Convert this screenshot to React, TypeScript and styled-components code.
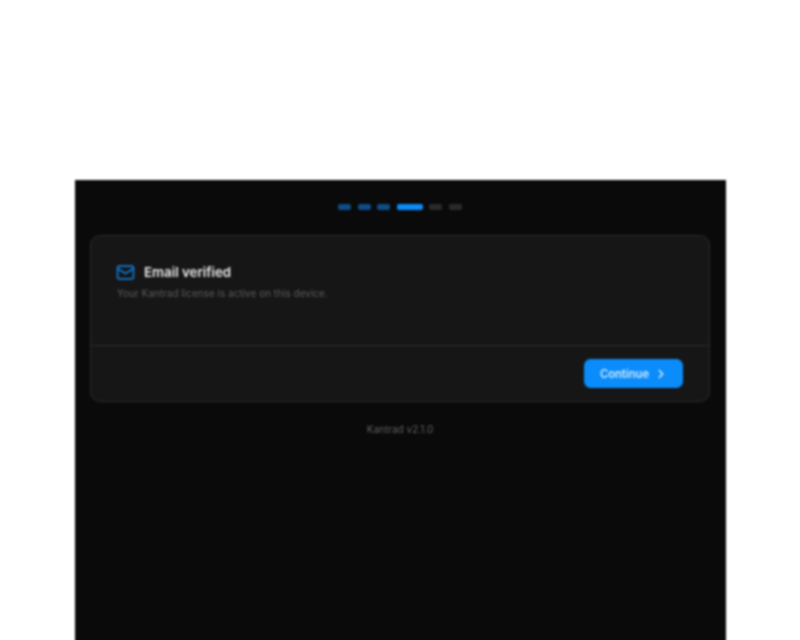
import React from "react";
import styled, { createGlobalStyle } from "styled-components";

const Global = createGlobalStyle`
  html, body { margin: 0; padding: 0; background: #fff; overflow: hidden; }
  body { font-family: Inter, "Liberation Sans", sans-serif; }
`;

const Page = styled.div`
  height: 640px;
  padding-top: 180px;
  box-sizing: border-box;
  display: flex;
  justify-content: center;
  overflow: hidden;
`;

const Panel = styled.main`
  width: 651px;
  height: 470px;
  background: #0a0a0a;
  padding: 23.5px 0 0;
  box-sizing: border-box;
  display: flex;
  flex-direction: column;
  align-items: center;
  filter: blur(0.8px);
`;

const Steps = styled.div`
  display: flex;
  gap: 6.5px;
  height: 6px;
  margin-bottom: 25.5px;
`;

const Step = styled.span<{ $state: "done" | "current" | "todo" }>`
  width: ${(p) => (p.$state === "current" ? 26 : 13)}px;
  height: 6px;
  border-radius: 2px;
  background: ${(p) =>
    p.$state === "current" ? "#0a8cfa" : p.$state === "done" ? "#0f4c86" : "#2a2a2a"};
`;

const Card = styled.section`
  width: 620px;
  height: 167px;
  box-sizing: border-box;
  background: #161616;
  border: 1px solid #2c2c2c;
  border-radius: 10px;
  display: flex;
  flex-direction: column;
`;

const Body = styled.div`
  flex: 1;
  padding: 26px 25px 0;
`;

const TitleRow = styled.div`
  display: flex;
  align-items: center;
  gap: 9px;
  height: 20px;
`;

const Title = styled.h1`
  margin: 0;
  font-size: 13.3px;
  line-height: 20px;
  font-weight: 600;
  color: #ececec;
`;

const Subtitle = styled.p`
  margin: 3px 0 0 1px;
  font-size: 10px;
  line-height: 16px;
  color: #5c5c5c;
`;

const Footer = styled.div`
  height: 56px;
  box-sizing: border-box;
  border-top: 1px solid #2e2e2e;
  padding: 13px 26px 0;
  display: flex;
  justify-content: flex-end;
  align-items: flex-start;
`;

const Button = styled.button`
  width: 99px;
  height: 29px;
  border: 0;
  border-radius: 6.5px;
  background: #0a8cfa;
  color: #d6ebff;
  font-family: inherit;
  font-size: 11.2px;
  font-weight: 600;
  display: flex;
  align-items: center;
  justify-content: center;
  gap: 5px;
  padding: 0 0 0 1px;
`;

const Version = styled.div`
  margin-top: 19px;
  font-size: 10px;
  line-height: 16px;
  color: #606060;
`;

const MailIcon = () => (
  <svg width="19" height="19" viewBox="0 0 24 24" fill="none" stroke="#0f7ad6" strokeWidth="2.2" strokeLinecap="round" strokeLinejoin="round">
    <path d="m22 7-8.991 5.727a2 2 0 0 1-2.009 0L2 7" />
    <rect x="2" y="4" width="20" height="16" rx="2" />
  </svg>
);

const ChevronIcon = () => (
  <svg width="14" height="14" viewBox="0 0 24 24" fill="none" stroke="#e0f0ff" strokeWidth="2.4" strokeLinecap="round" strokeLinejoin="round">
    <path d="m9 18 6-6-6-6" />
  </svg>
);

const states = ["done", "done", "done", "current", "todo", "todo"] as const;

export default function App() {
  return (
    <>
      <Global />
      <Page>
        <Panel>
          <Steps>
            {states.map((s, i) => (
              <Step key={i} $state={s} />
            ))}
          </Steps>
          <Card>
            <Body>
              <TitleRow>
                <MailIcon />
                <Title>Email verified</Title>
              </TitleRow>
              <Subtitle>Your Kantrad license is active on this device.</Subtitle>
            </Body>
            <Footer>
              <Button>
                Continue
                <ChevronIcon />
              </Button>
            </Footer>
          </Card>
          <Version>Kantrad v2.1.0</Version>
        </Panel>
      </Page>
    </>
  );
}
